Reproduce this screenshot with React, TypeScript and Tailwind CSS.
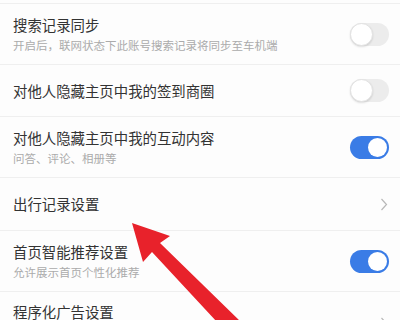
import React from "react";

const font = { fontFamily: '"Noto Sans CJK SC", "Noto Sans", sans-serif' };

function Toggle({ on }: { on: boolean }) {
  return on ? (
    <div className="w-[39px] h-[23px] rounded-full bg-[#3a7ce6] flex items-center justify-end pr-[2px]">
      <div className="w-[19px] h-[19px] rounded-full bg-white" />
    </div>
  ) : (
    <div className="w-[39px] h-[23px] rounded-full bg-[#ececec] flex items-center justify-start">
      <div className="w-[23px] h-[23px] rounded-full bg-white border border-[#e2e2e2] shadow-[0_1px_2px_rgba(0,0,0,0.12)]" />
    </div>
  );
}

function Chevron() {
  return (
    <svg width="8" height="13" viewBox="0 0 8 13" fill="none">
      <path d="M1.5 1 L6.5 6.5 L1.5 12" stroke="#b8b8b8" strokeWidth="1.2" />
    </svg>
  );
}

type Row = { title: string; sub?: string; right: "on" | "off" | "chev"; h: string };

const rows: Row[] = [
  { title: "搜索记录同步", sub: "开启后，联网状态下此账号搜索记录将同步至车机端", right: "off", h: "h-[61px]" },
  { title: "对他人隐藏主页中我的签到商圈", right: "off", h: "h-[52px]" },
  { title: "对他人隐藏主页中我的互动内容", sub: "问答、评论、相册等", right: "on", h: "h-[61px]" },
  { title: "出行记录设置", right: "chev", h: "h-[53px]" },
  { title: "首页智能推荐设置", sub: "允许展示首页个性化推荐", right: "on", h: "h-[61px]" },
];

export default function App() {
  return (
    <div className="relative w-[400px] h-[320px] overflow-hidden bg-[#fdfdfd]" style={font}>
      <div className="h-[3px]" />
      {rows.map((r, i) => (
        <div key={i} className={`${r.h} border-t border-[#efefef] flex items-center pl-[13px] pr-[11px]`}>
          <div className="flex-1 flex flex-col gap-[2px]">
            <div className="text-[14.4px] leading-[20px] text-[#333333]">{r.title}</div>
            {r.sub && <div className="text-[11.5px] leading-[16px] text-[#ababab]">{r.sub}</div>}
          </div>
          {r.right === "chev" ? (
            <div className="pr-[1px]"><Chevron /></div>
          ) : (
            <Toggle on={r.right === "on"} />
          )}
        </div>
      ))}
      <div className="h-[61px] border-t border-[#efefef] flex pl-[13px] pr-[11px]">
        <div className="flex-1 pt-[10px] text-[14.4px] leading-[20px] text-[#333333]">程序化广告设置</div>
        <div className="pr-[1px] pt-[25px]"><Chevron /></div>
      </div>
      <svg className="absolute left-0 top-0" width="400" height="320" viewBox="0 0 400 320">
        <polygon
          points="132,223 170,236 160,243 241,322 217,322 152,252 143,262"
          fill="#e8222b"
        />
      </svg>
    </div>
  );
}
